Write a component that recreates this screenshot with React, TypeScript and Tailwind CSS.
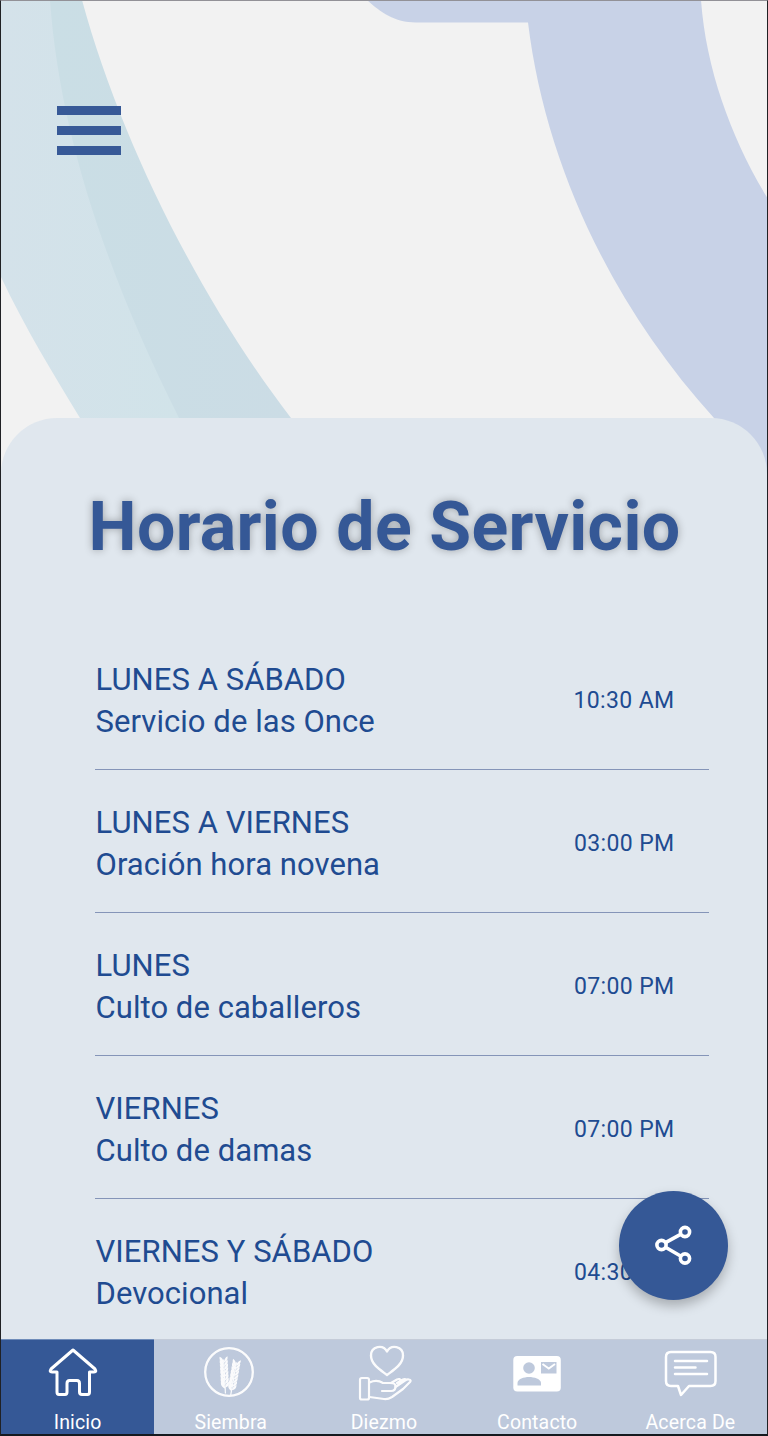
import type { ReactNode } from 'react';

const services = [
  { days: 'LUNES A SÁBADO', name: 'Servicio de las Once', time: '10:30 AM' },
  { days: 'LUNES A VIERNES', name: 'Oración hora novena', time: '03:00 PM' },
  { days: 'LUNES', name: 'Culto de caballeros', time: '07:00 PM' },
  { days: 'VIERNES', name: 'Culto de damas', time: '07:00 PM' },
  { days: 'VIERNES Y SÁBADO', name: 'Devocional', time: '04:30 PM' },
];

function Backdrop() {
  return (
    <svg className="absolute inset-0" width="766" height="480" viewBox="1 1 766 480" aria-hidden="true">
      <defs>
        <linearGradient id="teal" x1="0" x2="180" y1="0" y2="0" gradientUnits="userSpaceOnUse">
          <stop offset="0" stopColor="#d4e2ea" />
          <stop offset="1" stopColor="#d1e3e9" />
        </linearGradient>
        <linearGradient id="tealDark" x1="50" x2="290" y1="0" y2="0" gradientUnits="userSpaceOnUse">
          <stop offset="0" stopColor="#cadee5" />
          <stop offset="1" stopColor="#cbdce5" />
        </linearGradient>
      </defs>
      <path d="M0 0H60L185 425H84L80 418C52 372 25 328 0 275Z" fill="url(#teal)" />
      <path d="M50 0H82C120 140 200 300 291 418V425H182L179 418C110 280 60 140 50 0Z" fill="url(#tealDark)" />
      <path d="M367 0C379 11 394 22.500 416 22.500H528C546 170 616 310 714 418L768 485V199C732 140 706 70 701 0Z" fill="#c8d2e7" />
    </svg>
  );
}

function HomeIcon() {
  return (
    <svg className="-ml-[9px] -mt-[1px]" width="52" height="52" viewBox="0 0 52 52" fill="none" stroke="white" strokeWidth="3" strokeLinejoin="round">
      <path d="M26 3 L48 22 Q50 25 47 25 H42.500 V45 Q42.500 47.500 40.500 47.500 H35 Q32.500 47.500 32.500 45 V36.500 Q32.500 33.500 30 33.500 H22.500 Q20 33.500 20 36.500 V45 Q20 47.500 18 47.500 H12 Q10 47.500 10 45 V25 H5 Q2 25 4 22 Z" />
    </svg>
  );
}

function WheatStalk({ transform }: { transform: string }) {
  const rows = [0, 3.6, 7.2, 10.8, 14.4, 18, 21.6, 25.2];
  return (
    <g transform={transform}>
      <path d="M0 3V37" stroke="white" strokeWidth="1.200" />
      {rows.map((y) => (
        <path key={y} d={`M0 ${y + 7}Q-4.800 ${y + 5} -4 ${y}Q-.5 ${y + 1.5} 0 ${y + 6}Q4.800 ${y + 5} 4 ${y}Q.5 ${y + 1.5} 0 ${y + 7}Z`} fill="white" />
      ))}
    </g>
  );
}

function WheatIcon() {
  return (
    <svg className="-ml-[4px] -mt-[3px]" width="52" height="52" viewBox="0 0 52 52" fill="none" opacity="0.94">
      <circle cx="26" cy="26" r="23.800" stroke="white" strokeWidth="2.300" />
      <WheatStalk transform="translate(20.500 10.500) rotate(-3)" />
      <WheatStalk transform="translate(34 13.500) rotate(10)" />
    </svg>
  );
}

function GivingIcon() {
  return (
    <svg className="ml-[1px]" width="56" height="58" viewBox="0 0 56 58" fill="none" stroke="white" strokeWidth="2.200" strokeLinecap="round" strokeLinejoin="round" opacity="0.94">
      <path d="M30 31C23.500 26 14 20.500 14 11.500C14 2 26 0 30 7.500C34 0 46 2 46 11.500C46 20.500 36.500 26 30 31Z" strokeWidth="2.400" />
      <rect x="3" y="34" width="9" height="21.500" rx="1.800" />
      <path d="M12.500 38.500C18 36 22 36.500 26 39H34Q38.500 39 38.500 42.500Q38.500 47 34 47H25" />
      <path d="M12.500 53L27 55Q31 55.500 35 53L46 45L53 38Q54.500 36 52 35.500Q50 35 48 36.500L38.500 43M34 39L40 35.500Q43 34 44 37M40 39L46 35.500Q48 34.500 49 36" />
    </svg>
  );
}

function ContactIcon() {
  return (
    <svg className="mt-[1px]" width="48" height="36" viewBox="0 0 48 36">
      <rect x="0.300" width="47.500" height="35.500" rx="4" fill="white" />
      <circle cx="16" cy="12" r="5.800" fill="#bec9dc" />
      <path d="M4.500 29.500V27C4.500 23 11 21 16 21S28 23 28 27V29.500Z" fill="#bec9dc" />
      <path d="M28 6H43.500V17.500H28Z" fill="#bec9dc" />
      <path d="M29.500 8L35.800 12.500L42 8" fill="none" stroke="white" strokeWidth="1.900" />
    </svg>
  );
}

function ChatIcon() {
  return (
    <svg className="ml-[2px] mt-[2px]" width="54" height="50" viewBox="0 0 54 50" fill="none" stroke="white" strokeWidth="2.500" strokeLinejoin="round" strokeLinecap="round">
      <path d="M7 3H46.500Q51.500 3 51.500 8V32Q51.500 37 46.500 37H25L17 46L14 37H7Q2 37 2 32V8Q2 3 7 3Z" />
      <path d="M11 12H43M11 18.500H31.500M11 25H43" />
    </svg>
  );
}

function Tab({ icon, label, active = false }: { icon: ReactNode; label: string; active?: boolean }) {
  return (
    <button className={`flex flex-1 flex-col items-center border-t ${active ? 'border-[#6f8cb9] bg-[#355896]' : 'border-[#c5ccd8] bg-[#bec9dc]'}`}>
      <span className="flex h-[66px] items-center justify-center">{icon}</span>
      <span className="mt-[5px] whitespace-nowrap text-[19.500px] leading-[24px] tracking-[0.150px] text-white">{label}</span>
    </button>
  );
}

export default function App() {
  return (
    <div className="relative flex h-[1436px] w-[768px] flex-col overflow-hidden border border-b-2 border-[#202124] border-t-[#929197] border-b-[#15191f] bg-[#f2f2f2] font-['Roboto',sans-serif] text-[#204b91]">
      <Backdrop />
      <header className="relative h-[417px] shrink-0 pl-[56px] pt-[105px]">
        <button className="flex w-[64px] flex-col gap-[11px]" aria-label="Menú">
          <span className="h-[9px] w-full bg-[#375997]" />
          <span className="h-[9px] w-full bg-[#375997]" />
          <span className="h-[9px] w-full bg-[#375997]" />
        </button>
      </header>
      <main className="relative h-[921px] shrink-0 overflow-hidden rounded-t-[56px] bg-[#e0e7ee] pl-[94px] pr-[58px]">
        <h1 className="-ml-[6.500px] mt-[69px] h-[80px] whitespace-nowrap text-[68px] font-bold leading-[80px] tracking-[0.370px] text-[#355896] [text-shadow:0_0_9px_rgba(0,0,0,0.3)]">
          Horario de Servicio
        </h1>
        <ul className="mt-[60px]">
          {services.map((s) => (
            <li key={s.days} className="flex h-[142.900px] items-center justify-between border-b border-[#8595b8] pr-[34.500px] pt-[6px]">
              <div className="pl-[0.500px] text-[31px] leading-[42px] tracking-[0.060px]">
                <p>{s.days}</p>
                <p>{s.name}</p>
              </div>
              <span className="text-[23px] leading-[28px] tracking-[0.380px]">{s.time}</span>
            </li>
          ))}
        </ul>
      </main>
      <nav className="relative flex flex-1">
        <Tab icon={<HomeIcon />} label="Inicio" active />
        <Tab icon={<WheatIcon />} label="Siembra" />
        <Tab icon={<GivingIcon />} label="Diezmo" />
        <Tab icon={<ContactIcon />} label="Contacto" />
        <Tab icon={<ChatIcon />} label="Acerca De" />
      </nav>
      <button aria-label="Compartir" className="absolute left-[617.500px] top-[1189.500px] flex size-[109px] items-center justify-center rounded-full bg-[#355896] shadow-[0_6px_12px_rgba(0,0,0,0.25)]">
        <svg width="40" height="42" viewBox="0 0 40 42" fill="none" stroke="white" strokeWidth="3.600">
          <circle cx="8.500" cy="21" r="4.600" />
          <circle cx="32" cy="8" r="4.600" />
          <circle cx="32" cy="34.500" r="4.600" />
          <path d="M12.500 18.700L28 10.200M12.500 23.300L28 32.200" />
        </svg>
      </button>
    </div>
  );
}
